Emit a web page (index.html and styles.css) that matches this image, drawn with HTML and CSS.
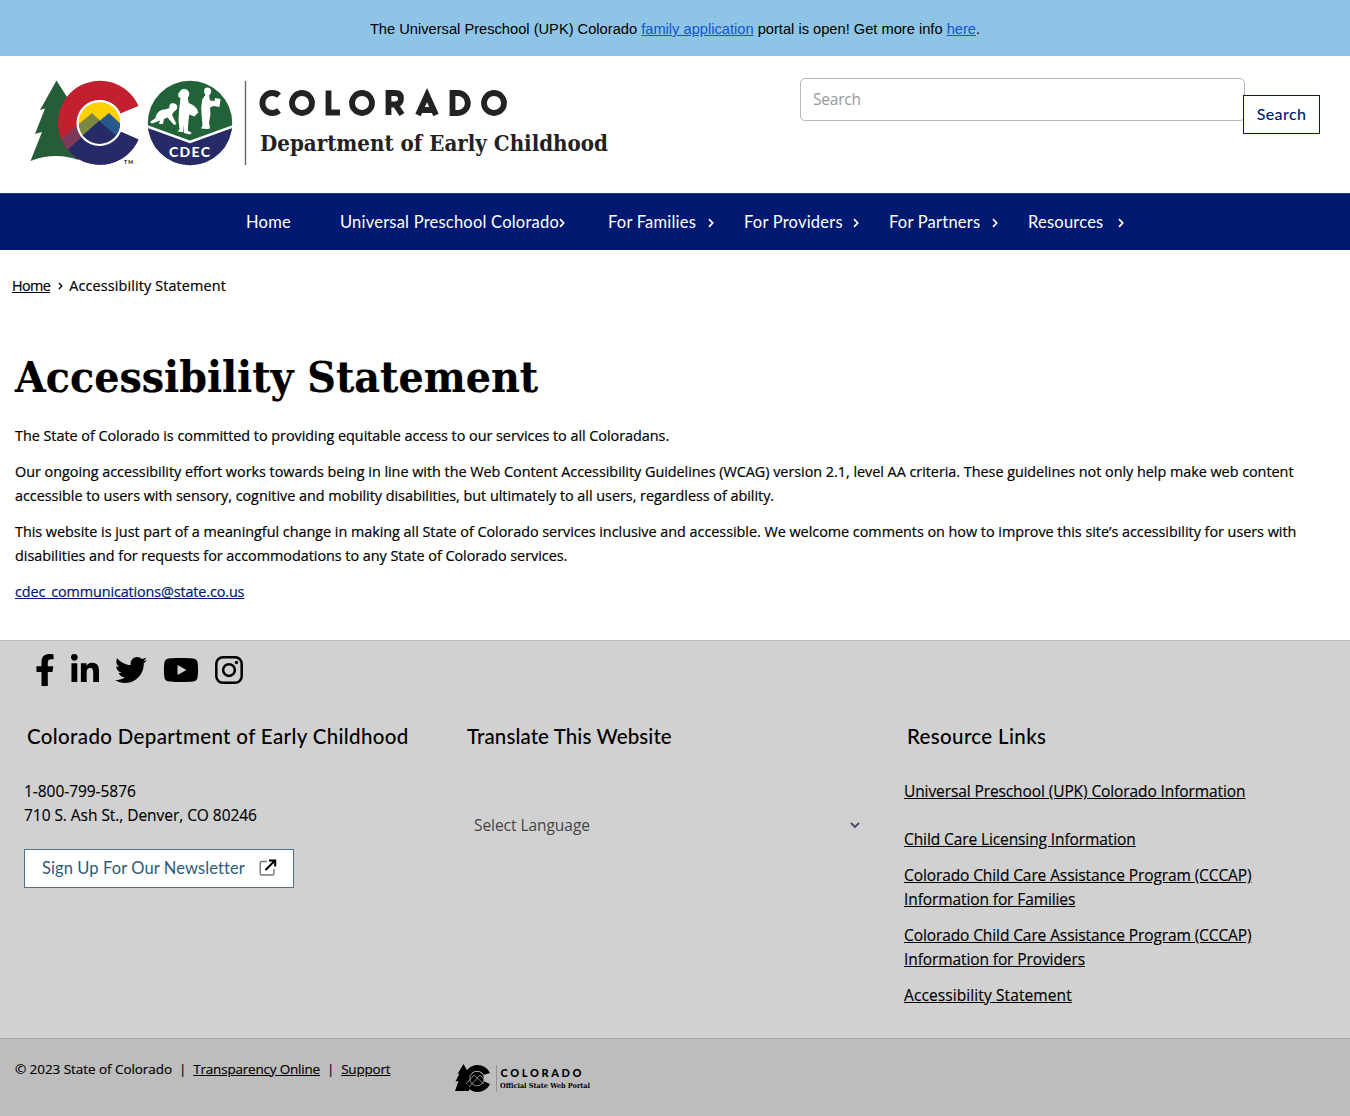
FILE: index.html
```html
<!DOCTYPE html>
<html lang="en">
<head>
<meta charset="utf-8">
<title>Accessibility Statement | Colorado Department of Early Childhood</title>
<link rel="stylesheet" href="styles.css">
</head>
<body>
<svg class="defs" width="0" height="0" aria-hidden="true">
  <symbol id="chev" viewBox="0 0 6 10"><path d="M1 1.2 4.7 5 1 8.8" fill="none" stroke="currentColor" stroke-width="1.7"/></symbol>
</svg>
<div class="banner"><p>The Universal Preschool (UPK) Colorado <a href="#">family application</a> portal is open! Get more info <a href="#">here</a>.</p></div>

<header class="header">
  <svg class="logo" viewBox="28 79 584 90" role="img" aria-label="Colorado Department of Early Childhood">
    <defs>
      <clipPath id="cClip"><path d="M138.5 106A42 42 0 1 0 138.5 139.500L120.500 131.500A22.500 22.500 0 1 1 120.500 113.500Z"/></clipPath>
      <clipPath id="inClip"><circle cx="99.500" cy="123" r="21"/></clipPath>
      <clipPath id="seal"><circle cx="190" cy="123" r="42.200"/></clipPath>
    </defs>
    <path fill="#245d38" d="M56.500 80.500 40 110l5-1.500L35 134l7-2-11.500 29c15-6 32-7 48-1L76 90l-9 7Z"/>
    <circle cx="99.500" cy="123" r="23" fill="#fff"/>
    <g clip-path="url(#cClip)">
      <rect x="56" y="80" width="86" height="87" fill="#c3202f"/>
      <path fill="#7b3a57" d="M56 144 92 112 110 130 80 166H56Z"/>
      <path fill="#262b67" d="M61 156 99 121 142 158V170H66ZM99 121 112 110 142 137V170H99Z"/>
      <path fill="#47516a" d="M56 156 60 161 66 150 76 158 65 170H50Z"/>
    </g>
    <g clip-path="url(#inClip)">
      <rect x="77" y="100" width="46" height="46" fill="#ffd000"/>
      <path fill="#7d8744" d="M74 128 92 113 107 127 86 145H74Z"/>
      <path fill="#29588c" d="M96 124 109 113 126 129V146H108Z"/>
      <path fill="#262b67" d="M74 143 99 121 126 144V149H74Z"/>
    </g>
    <circle cx="99.500" cy="123" r="22" fill="none" stroke="#fff" stroke-width="2"/>
    <path fill="#fff" d="m120 114 20-8.500v34l-20-8.500Z"/>
    <text class="brand-sans" x="124" y="164" font-size="5" textLength="9">TM</text>
    <g clip-path="url(#seal)">
      <rect x="147" y="80" width="86" height="86" fill="#226238"/>
      <path fill="#262b67" d="M146 125 190 142 234 125V167H146Z"/>
      <path d="M146 126 190 142 234 126" fill="none" stroke="#fff" stroke-width="2.500"/>
    </g>
    <g fill="#fff">
      <path d="M171 103.500c2.500-1 6 0 6.300 3 .2 2.500-1.500 4.500-3.300 5l-2 3.500 4.500 9-2.500 1-6.500-7.500-3.500 1.500-1 5h-4l1-3.500-8 3-2-1.500 5.500-4c1-6 5-8.500 9.500-8.500l4.500-1.500c-.5-2 0-3.500 1.500-4.500Z"/>
      <path d="M177.500 94.500c2-1.500 2.500-5 6-5.500 3-.3 5.500 1.500 5.800 4.500.2 2-1 3.500-1.500 4.500l1 5c4 1.500 8.500 4.500 9.500 9.500l-4 4-5-2-1 8-.5 8 4 2.500-2 1.500-6-1.500.3-9-1 8-5.600-.5 2-2-1-10 .5-9 1-8 .5-4.500-2-1-.5-3.500Z"/>
      <path d="M204.500 88.500c2-1.800 6-1.500 6.500 1.500.5 2-.5 4.500-2 5.500l1 5 4.500.5.500-3 5.500 1-1 8-6-1-3.500 1.500.5 7-1.500 8 1 6-3 .5-6-.5 1.500-3-.8-9-.5-9 1-8 3.200-4.500c-1.500-2-2-5-.4-6.500Z"/>
    </g>
    <text class="brand-sans" x="169" y="157" font-size="14" textLength="41" style="fill:#fff">CDEC</text>
    <path d="M245.500 81V165" stroke="#666" stroke-width="1.400"/>
    <g class="brand-stroke">
      <path d="M279 95.500A10 10 0 1 0 279 110.500"/><circle cx="302" cy="103" r="10"/><path d="M328.500 90.500V112.500H340"/><circle cx="362" cy="103" r="10"/>
      <path d="M388.500 115V93H395Q401 93 401 98.500T395 104.500H389M395 104 402 114.500"/><path d="M418 115 427 95 436 115M421 110H433"/>
      <path d="M452.500 93V113H458A9.800 10 0 0 0 458 93Z"/><circle cx="494" cy="103" r="10"/>
    </g>
    <text class="brand-slab" x="260" y="151" font-size="21.500" textLength="348" lengthAdjust="spacingAndGlyphs">Department of Early Childhood</text>
  </svg>
  <form class="search">
    <input class="search-input" type="text" placeholder="Search" aria-label="Search">
    <button class="search-btn" type="button">Search</button>
  </form>
</header>

<nav class="nav">
  <a class="item home" href="#">Home</a>
  <a class="item upk" href="#"><span>Universal Preschool Colorado</span><svg><use href="#chev"/></svg></a>
  <a class="item families" href="#"><span>For Families</span><svg><use href="#chev"/></svg></a>
  <a class="item providers" href="#"><span>For Providers</span><svg><use href="#chev"/></svg></a>
  <a class="item partners" href="#"><span>For Partners</span><svg><use href="#chev"/></svg></a>
  <a class="item resources" href="#"><span>Resources</span><svg><use href="#chev"/></svg></a>
</nav>

<main class="main">
  <div class="crumbs"><a href="#">Home</a><svg><use href="#chev"/></svg><span>Accessibility Statement</span></div>
  <h1>Accessibility Statement</h1>
  <p>The State of Colorado is committed to providing equitable access to our services to all Coloradans.</p>
  <p>Our ongoing accessibility effort works towards being in line with the Web Content Accessibility Guidelines (WCAG) version 2.1, level AA criteria. These guidelines not only help make web content<br>accessible to users with sensory, cognitive and mobility disabilities, but ultimately to all users, regardless of ability.</p>
  <p>This website is just part of a meaningful change in making all State of Colorado services inclusive and accessible. We welcome comments on how to improve this site’s accessibility for users with<br>disabilities and for requests for accommodations to any State of Colorado services.</p>
  <p><a class="mail" href="#">cdec_communications@state.co.us</a></p>
</main>

<footer class="footer">
  <div class="social">
    <svg viewBox="0 0 320 512" width="20"><path d="M279.140 288l14.220-92.660h-88.910v-60.130c0-25.350 12.420-50.060 52.240-50.060h40.420V6.260S260.430 0 225.360 0c-73.220 0-121.080 44.380-121.080 124.720v70.620H22.890V288h81.390v224h100.170V288z"/></svg>
    <svg viewBox="0 0 448 512" width="28"><path d="M100.280 448H7.400V148.900h92.880zM53.790 108.100C24.090 108.100 0 83.500 0 53.800a53.790 53.790 0 0 1 107.580 0c0 29.700-24.100 54.300-53.790 54.300zM447.900 448h-92.680V302.400c0-34.700-.7-79.200-48.290-79.200-48.290 0-55.690 37.700-55.690 76.700V448h-92.780V148.900h89.080v40.800h1.300c12.400-23.500 42.690-48.300 87.880-48.300 94 0 111.280 61.900 111.280 142.300V448z"/></svg>
    <svg viewBox="0 0 512 512" width="32"><path d="M459.370 151.716c.325 4.548.325 9.097.325 13.645 0 138.720-105.583 298.558-298.558 298.558-59.452 0-114.680-17.219-161.137-47.106 8.447.974 16.568 1.299 25.340 1.299 49.055 0 94.213-16.568 130.274-44.832-46.132-.975-84.792-31.188-98.112-72.772 6.498.974 12.995 1.624 19.818 1.624 9.421 0 18.843-1.300 27.614-3.573-48.081-9.747-84.143-51.980-84.143-102.985v-1.299c13.969 7.797 30.214 12.670 47.431 13.319-28.264-18.843-46.781-51.005-46.781-87.391 0-19.492 5.197-37.360 14.294-52.954 51.655 63.675 129.300 105.258 216.365 109.807-1.624-7.797-2.599-15.918-2.599-24.040 0-57.828 46.782-104.934 104.934-104.934 30.213 0 57.502 12.670 76.670 33.137 23.715-4.548 46.456-13.320 66.599-25.340-7.798 24.366-24.366 44.833-46.132 57.827 21.117-2.273 41.584-8.122 60.426-16.243-14.292 20.791-32.161 39.308-52.628 54.253z"/></svg>
    <svg viewBox="0 0 576 512" width="36"><path d="M549.655 124.083c-6.281-23.650-24.787-42.276-48.284-48.597C458.781 64 288 64 288 64S117.220 64 74.629 75.486c-23.497 6.322-42.003 24.947-48.284 48.597-11.412 42.867-11.412 132.305-11.412 132.305s0 89.438 11.412 132.305c6.281 23.650 24.787 41.500 48.284 47.821C117.220 448 288 448 288 448s170.780 0 213.371-11.486c23.497-6.321 42.003-24.171 48.284-47.821 11.412-42.867 11.412-132.305 11.412-132.305s0-89.438-11.412-132.305zm-317.510 213.508V175.185l142.739 81.205-142.739 81.201z"/></svg>
    <svg viewBox="0 0 448 512" width="28"><g fill="none" stroke="#000" stroke-width="40"><rect x="21" y="53" width="406" height="406" rx="105"/><circle cx="224" cy="256" r="94"/></g><circle cx="344" cy="136" r="27"/></svg>
  </div>
  <div class="cols">
    <section>
      <h2>Colorado Department of Early Childhood</h2>
      <p class="contact">1-800-799-5876<br>710 S. Ash St., Denver, CO 80246</p>
      <a class="signup" href="#"><span>Sign Up For Our Newsletter</span><svg viewBox="0 0 18 18" width="18" height="18" fill="none"><path d="M8 2.500H2.500Q1.200 2.500 1.200 4V14.500Q1.200 16 2.500 16H13.500Q15 16 15 14.500V10" stroke="#777" stroke-width="1.400"/><path d="M6.500 11 15 2.500M10 1.500H16.200V7.500" stroke="#000" stroke-width="2.100"/></svg></a>
    </section>
    <section>
      <h2 class="h-trans">Translate This Website</h2>
      <div class="select"><span>Select Language</span><svg viewBox="0 0 10 7" width="10" height="7"><path d="m1 1 4 4 4-4" fill="none" stroke="#46466e" stroke-width="1.800"/></svg></div>
    </section>
    <section>
      <h2>Resource Links</h2>
      <ul class="links">
        <li class="first"><a href="#">Universal Preschool (UPK) Colorado Information</a></li>
        <li><a href="#">Child Care Licensing Information</a></li>
        <li><a href="#">Colorado Child Care Assistance Program (CCCAP)<br>Information for Families</a></li>
        <li><a href="#">Colorado Child Care Assistance Program (CCCAP)<br>Information for Providers</a></li>
        <li class="last"><a href="#">Accessibility Statement</a></li>
      </ul>
    </section>
  </div>
</footer>

<div class="legal">
  <p><span class="copy">© 2023 State of Colorado</span><i>|</i><a href="#">Transparency Online</a><i>|</i><a href="#">Support</a></p>
  <svg class="portal" viewBox="454 1062 138 32" role="img" aria-label="Colorado Official State Web Portal">
    <path d="M463.500 1064 457.500 1074l2-.5-4 8 3-.5-3.500 10h14V1074Z"/>
    <path d="M490 1073A13.500 13.500 0 1 0 490 1084L483.500 1081A7 7 0 1 1 483.500 1075Z"/>
    <circle cx="477" cy="1078.500" r="7"/>
    <g fill="none" stroke="#bdbdbd" stroke-width=".7"><circle cx="477" cy="1078.500" r="7.300"/><path d="M466 1084 474 1075 484 1084M469 1087 480 1075 486 1081"/></g>
    <path d="M496.500 1065V1092" stroke="#888" stroke-width=".8"/>
    <text class="brand-sans mini" x="500.500" y="1076.500" font-size="11" textLength="81">COLORADO</text>
    <text class="brand-slab mini" x="500" y="1088" font-size="7" textLength="90" lengthAdjust="spacingAndGlyphs">Official State Web Portal</text>
  </svg>
</div>
</body>
</html>
```

FILE: styles.css
```css
* { box-sizing: border-box; }
body { margin: 0; background: #fff; color: #000; font-family: "Open Sans", "Noto Sans", sans-serif; font-size: 14.4px; line-height: 24px; }
p, h1, h2, ul { margin: 0; padding: 0; }
a { color: inherit; }
.defs { display: block; height: 0; }

.banner { height: 56px; background: #8ec4e6; display: flex; align-items: center; justify-content: center; padding-top: 2px; font: 14.67px/20px "Liberation Sans", Arial, sans-serif; }
.banner a { color: #1155cc; }

.header { height: 137px; display: flex; justify-content: space-between; padding: 22px 30px 0 28px; }
.logo { width: 584px; height: 90px; margin-top: 1px; overflow: visible; }
.brand-sans { font-family: Lato, sans-serif; font-weight: 900; fill: #222; }
.brand-slab { font-family: "DejaVu Serif", serif; font-weight: 700; fill: #222; }
.mini { fill: #000; }
.brand-stroke { fill: none; stroke: #222; stroke-width: 5.8; }
.search { display: flex; align-items: flex-start; }
.search-input { width: 445px; height: 43px; border: 1px solid #b8b8b8; border-radius: 5px; padding: 0 12px 2px; font: 15.5px "Open Sans", sans-serif; letter-spacing: -.2px; }
.search-input::placeholder { color: #999; }
.search-btn { width: 77px; height: 39px; margin: 17px 0 0 -2px; padding: 0 0 2px; border: 1px solid #001970; background: #fff; color: #001970; font: 500 16px Lato, sans-serif; letter-spacing: .4px; }

.nav { height: 57px; background: #001970; border-top: 1px solid #2a3c80; color: #fff; display: flex; align-items: center; padding-left: 246px; font-family: Lato, sans-serif; font-size: 16.5px; letter-spacing: .22px; }
.item { display: flex; justify-content: space-between; align-items: center; padding: 0 30px 1px 0; text-decoration: none; white-space: nowrap; }
.item svg { width: 6px; height: 10px; margin-top: 2px; flex: none; }
.item.home { width: 94px; }
.item.upk { width: 268px; padding-right: 43px; }
.item.upk span { width: 219px; }
.families { width: 136px; }
.providers { width: 145px; }
.partners { width: 139px; }
.resources { width: 126px; }

.main { height: 390px; padding: 24px 15px 0; letter-spacing: -.027px; -webkit-text-stroke: .2px; }
.crumbs { display: flex; align-items: center; margin-left: -3px; letter-spacing: .13px; }
.crumbs a { letter-spacing: -.6px; }
.crumbs svg { width: 5px; height: 8px; margin: 0 6px 0 8px; }
h1 { width: max-content; margin: 49px 0 15px; font: 700 42px/62px "DejaVu Serif", serif; letter-spacing: 0; transform: scaleX(.945); transform-origin: left; }
.main p { margin-bottom: 12px; white-space: nowrap; }
.main .mail { color: #001970; letter-spacing: -.13px; }

.footer { height: 398px; background: #d1d1d1; border-top: 1px solid #bbb; padding: 12px 24px 0; }
.social { display: flex; gap: 16px; padding-left: 11px; height: 33px; padding-top: .5px; }
.social svg { height: 32px; }
.cols { display: grid; grid-template-columns: 440px 440px 1fr; margin-top: 34px; }
h2 { font: 500 20.5px/32px Lato, sans-serif; letter-spacing: .35px; padding-left: 3px; white-space: nowrap; }
.h-trans { letter-spacing: .1px; }
.contact { margin-top: 27px; font-size: 15.5px; letter-spacing: -.05px; -webkit-text-stroke: .15px; }
.signup { display: flex; align-items: center; justify-content: space-between; width: 270px; height: 39px; margin-top: 22px; padding: 0 16px 1px 17px; border: 1px solid #4f6f8a; background: #fff; color: #2d5c78; text-decoration: none; font-family: Lato, sans-serif; font-size: 16.5px; letter-spacing: .1px; }
.select { display: flex; justify-content: space-between; align-items: center; width: 396px; margin-top: 61px; padding-left: 10px; color: #444; font-size: 15.5px; letter-spacing: -.05px; }
.links { list-style: none; margin-top: 27px; font-size: 15.5px; letter-spacing: -.1px; white-space: nowrap; -webkit-text-stroke: .15px; }
.links li { margin-bottom: 12px; }
.links .first { margin-bottom: 24px; }
.links .last { letter-spacing: .1px; }

.legal { height: 78px; background: #bdbdbd; border-top: 1px solid #aaa; display: flex; padding: 18px 15px 0; font-size: 13.5px; }
.legal p { width: 439px; white-space: nowrap; letter-spacing: -.2px; -webkit-text-stroke: .15px; }
.legal .copy { letter-spacing: -.06px; }
.legal i { font-style: normal; margin: 0 7px; }
.portal { width: 138px; height: 32px; margin-top: 5px; overflow: visible; }
```
